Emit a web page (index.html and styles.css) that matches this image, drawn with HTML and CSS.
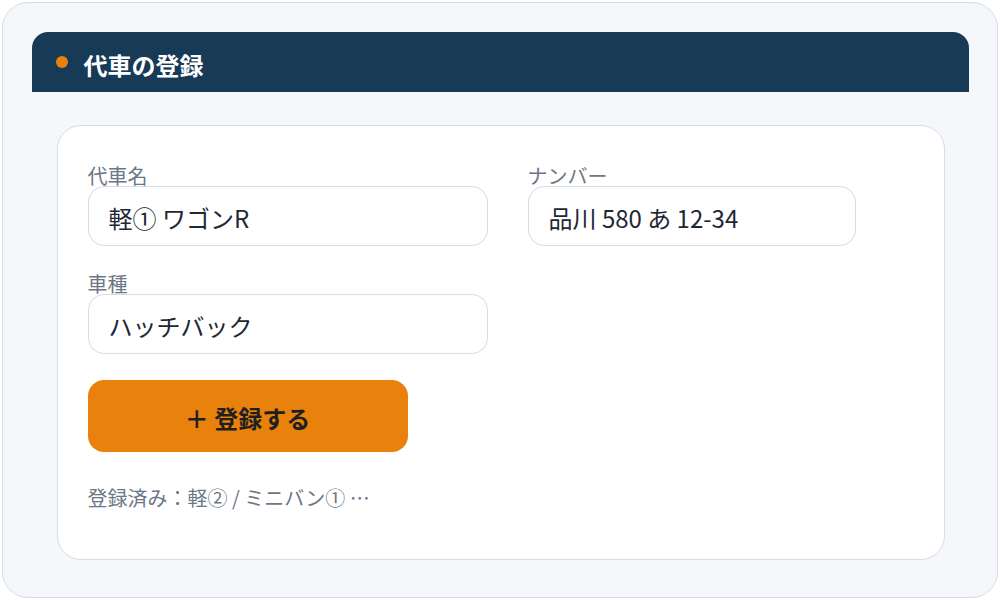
FILE: index.html
```html
<!DOCTYPE html>
<html lang="ja">
<head>
<meta charset="utf-8">
<link rel="stylesheet" href="styles.css">
</head>
<body>
<div class="frame">
  <div class="header">
    <span class="dot"></span>
    <h1 class="title">代車の登録</h1>
  </div>
  <div class="card">
    <div class="grid">
      <label class="field">
        <span class="label">代車名</span>
        <input class="input" type="text" value="軽① ワゴンR">
      </label>
      <label class="field narrow">
        <span class="label">ナンバー</span>
        <input class="input" type="text" value="品川 580 あ 12-34">
      </label>
      <label class="field">
        <span class="label">車種</span>
        <input class="input" type="text" value="ハッチバック">
      </label>
    </div>
    <button class="btn" type="button">＋ 登録する</button>
    <p class="note">登録済み：軽② / ミニバン① …</p>
  </div>
</div>
</body>
</html>
```
FILE: styles.css
```css
* { box-sizing: border-box; }
html, body { margin: 0; padding: 0; background: #ffffff; }
body {
  font-family: "Noto Sans CJK JP", "Noto Sans", sans-serif;
  width: 1000px;
  height: 600px;
  overflow: hidden;
}
.frame {
  margin: 2px;
  width: 996px;
  height: 596px;
  border: 1.5px solid #d5dde6;
  border-radius: 26px;
  background: #f5f7fa;
  padding: 28.5px 28.5px;
}
.header {
  height: 60px;
  background: #173a56;
  border-radius: 16px 16px 0 0;
  display: flex;
  align-items: center;
  padding-left: 24px;
  gap: 16px;
}
.dot {
  width: 12px;
  height: 12px;
  border-radius: 50%;
  background: #e8820c;
  flex: none;
}
.title {
  margin: 7px 0 0 0;
  font-size: 24px;
  line-height: 1;
  font-weight: 700;
  color: #ffffff;
}
.card {
  margin: 33px 24px 0 25px;
  height: 435px;
  background: #ffffff;
  border: 1.5px solid #d5dde6;
  border-radius: 24px;
  padding: 39px 30px 0 30px;
}
.grid {
  display: grid;
  grid-template-columns: 400px 328px;
  column-gap: 40px;
  row-gap: 27px;
}
.field {
  display: flex;
  flex-direction: column;
}
.label {
  font-size: 20px;
  line-height: 21px;
  color: #6b7785;
}
.input {
  height: 60px;
  width: 100%;
  border: 1px solid #d5dde6;
  border-radius: 16px;
  background: #ffffff;
  padding: 4px 20px 0 20px;
  font-family: "Noto Sans CJK JP", "Noto Sans", sans-serif;
  font-size: 24px;
  color: #1e2833;
  outline: none;
}
.btn {
  margin-top: 26px;
  width: 320px;
  height: 72px;
  border: none;
  border-radius: 16px;
  background: #e8820c;
  color: #1f1f1f;
  font-family: "Noto Sans CJK JP", "Noto Sans", sans-serif;
  font-size: 24px;
  font-weight: 700;
  display: flex;
  align-items: center;
  justify-content: center;
  padding: 4px 0 0 0;
}
.note {
  margin: 36px 0 0 0;
  font-size: 20px;
  line-height: 1;
  color: #6b7785;
}
```
